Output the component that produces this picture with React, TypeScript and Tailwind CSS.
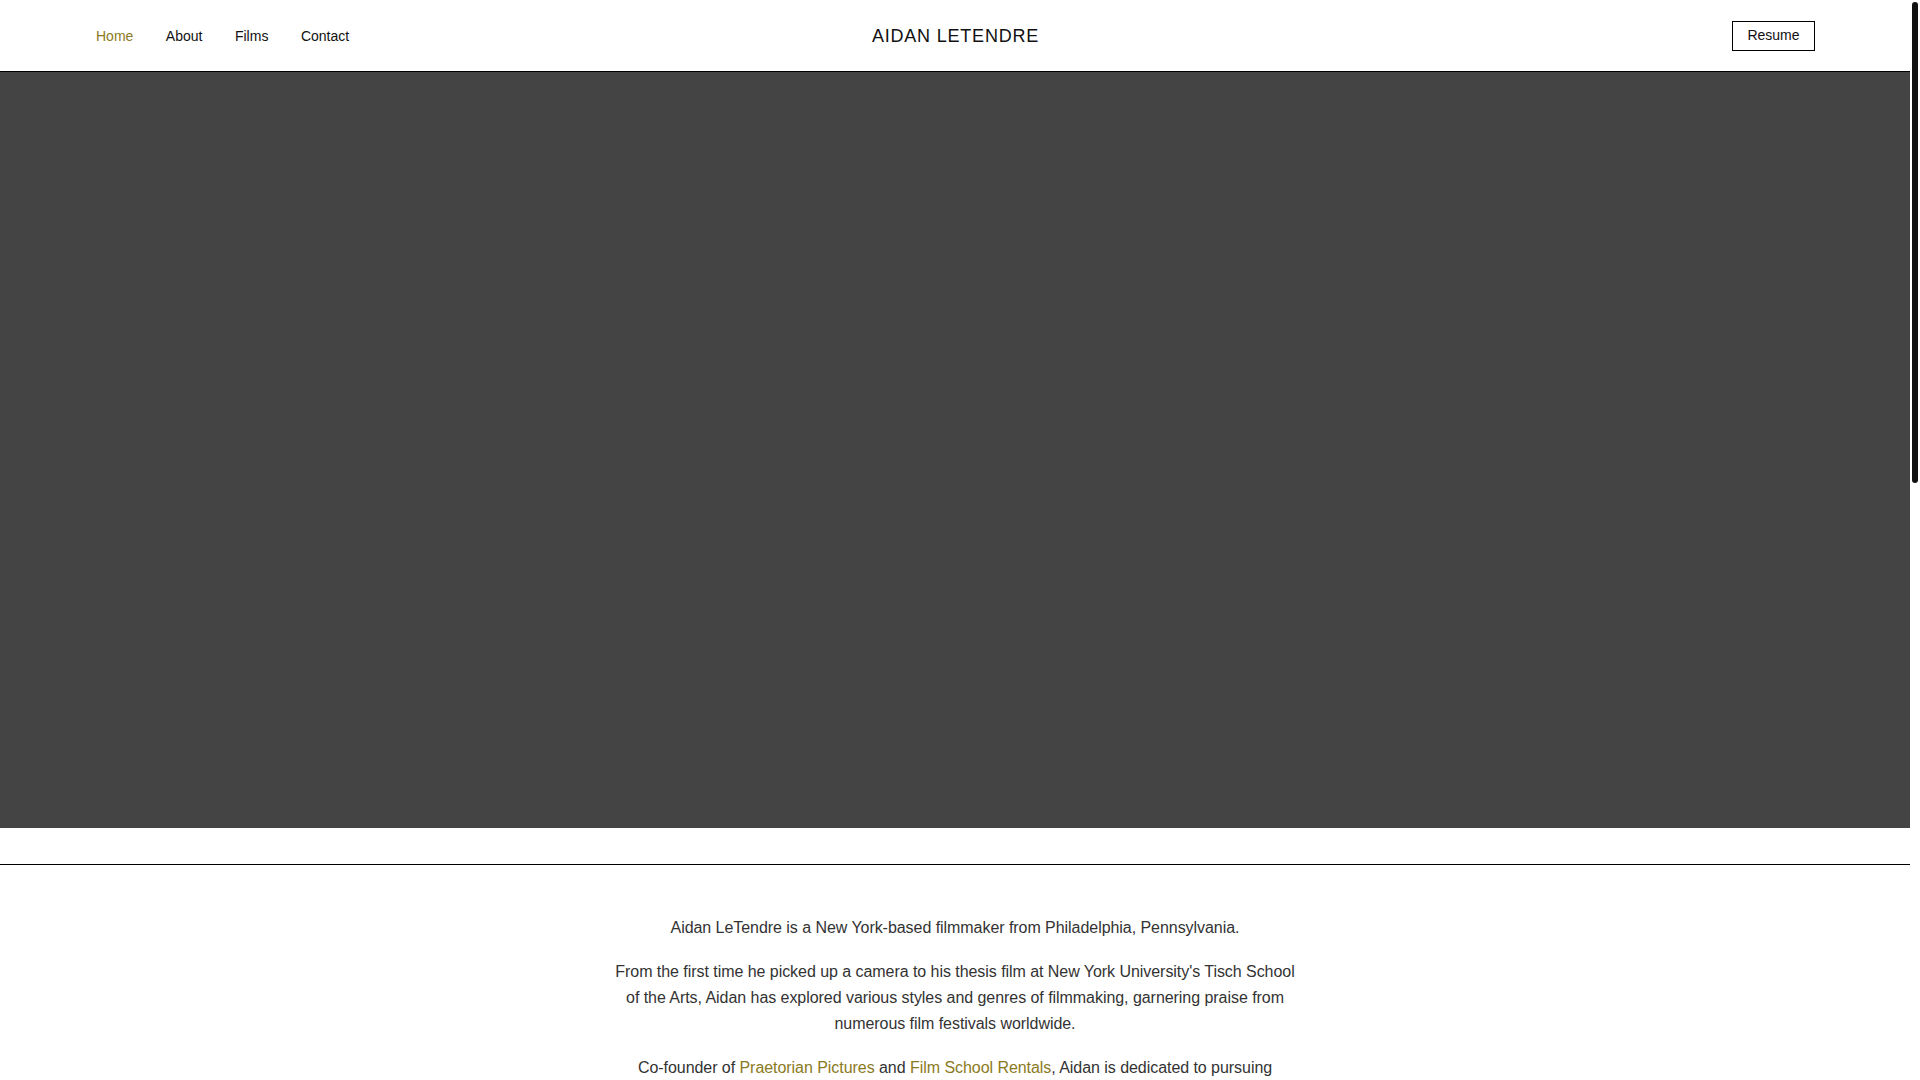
import React from "react";

const font = { fontFamily: '"Liberation Sans", Arial, Helvetica, sans-serif' };

export default function App() {
  return (
    <div
      className="flex h-[1080px] w-[1920px] overflow-hidden bg-white text-[#111]"
      style={font}
    >
      <div className="flex w-[1910px] shrink-0 flex-col">
        <header className="grid h-[72px] shrink-0 grid-cols-[1fr_auto_1fr] items-center border-b border-black pl-24 pr-[95px] pt-[1px]">
          <nav className="flex items-center gap-[32.5px] text-[14px]">
            <a className="text-[#8b7a22]">Home</a>
            <a>About</a>
            <a>Films</a>
            <a>Contact</a>
          </nav>
          <div className="text-[18px] tracking-[0.8px] text-[#111]">AIDAN LETENDRE</div>
          <div className="flex justify-end">
            <button className="-mt-[1px] flex h-[30px] w-[83px] items-center justify-center border border-black text-[14px] text-[#111]">
              Resume
            </button>
          </div>
        </header>

        <section className="h-[756px] shrink-0 bg-[#444444]" />

        <div className="h-[36px] shrink-0" />
        <div className="h-px shrink-0 bg-black" />

        <main className="flex justify-center pt-[50px]">
          <div className="flex w-[690px] flex-col gap-[18px] text-center text-[16px] leading-[26px] tracking-[-0.05px] text-[#333]">
            <p>Aidan LeTendre is a New York-based filmmaker from Philadelphia, Pennsylvania.</p>
            <p>
              From the first time he picked up a camera to his thesis film at New York University's Tisch School of the
              Arts, Aidan has explored various styles and genres of filmmaking, garnering praise from numerous film
              festivals worldwide.
            </p>
            <p>
              Co-founder of <a className="text-[#8b7a22]">Praetorian Pictures</a> and{" "}
              <a className="text-[#8b7a22]">Film School Rentals</a>, Aidan is dedicated to pursuing meaningful stories
              through thoughtful, collaborative filmmaking.
            </p>
          </div>
        </main>
      </div>

      <aside className="w-[10px] shrink-0 bg-white pl-[2px] pt-[2px]">
        <div className="h-[481px] w-[6px] rounded-full bg-[#111]" />
      </aside>
    </div>
  );
}
